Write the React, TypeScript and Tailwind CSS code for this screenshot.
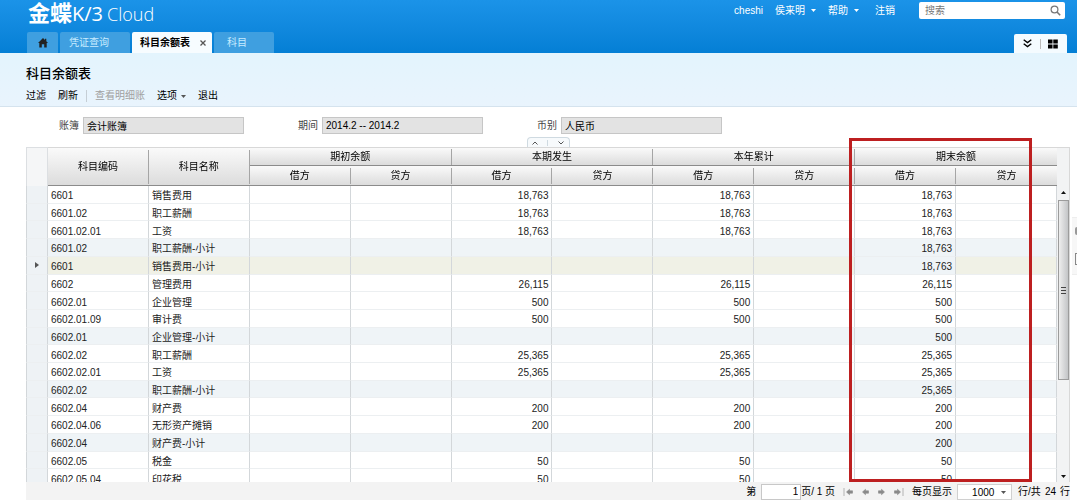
import { useState } from "react";

type Row = {
  code: string;
  name: string;
  amount: string;
  kind?: "subtotal" | "current";
};

const rows: Row[] = [
  { code: "6601", name: "销售费用", amount: "18,763" },
  { code: "6601.02", name: "职工薪酬", amount: "18,763" },
  { code: "6601.02.01", name: "工资", amount: "18,763" },
  { code: "6601.02", name: "职工薪酬-小计", amount: "18,763", kind: "subtotal" },
  { code: "6601", name: "销售费用-小计", amount: "18,763", kind: "current" },
  { code: "6602", name: "管理费用", amount: "26,115" },
  { code: "6602.01", name: "企业管理", amount: "500" },
  { code: "6602.01.09", name: "审计费", amount: "500" },
  { code: "6602.01", name: "企业管理-小计", amount: "500", kind: "subtotal" },
  { code: "6602.02", name: "职工薪酬", amount: "25,365" },
  { code: "6602.02.01", name: "工资", amount: "25,365" },
  { code: "6602.02", name: "职工薪酬-小计", amount: "25,365", kind: "subtotal" },
  { code: "6602.04", name: "财产费", amount: "200" },
  { code: "6602.04.06", name: "无形资产摊销", amount: "200" },
  { code: "6602.04", name: "财产费-小计", amount: "200", kind: "subtotal" },
  { code: "6602.05", name: "税金", amount: "50" },
  { code: "6602.05.04", name: "印花税", amount: "50" },
];

const groups = ["期初余额", "本期发生", "本年累计", "期末余额"];

function Caret({ className }: { className: string }) {
  return (
    <svg className={className} width="5" height="3" viewBox="0 0 5 3" aria-hidden="true">
      <path d="M0 0h5L2.5 3z" fill="currentColor" />
    </svg>
  );
}

function TopBar() {
  return (
    <header className="flex h-[53px] shrink-0 flex-col justify-between bg-linear-to-b from-[#1b93e8] to-[#047fd5] text-white">
      <div className="flex items-start justify-between pr-3 pl-7">
        <h1 className="flex items-baseline leading-[26px]">
          <span className="text-[22px] font-bold">金蝶</span>
          <span className="font-['Open_Sans'] text-xl font-medium">K/3</span>
          <span className="ml-1 font-['Open_Sans'] text-lg font-light">Cloud</span>
        </h1>
        <div className="flex items-center pt-0.5">
          <nav className="flex items-center">
            <span>cheshi</span>
            <button className="ml-3 flex items-center">
              侯来明
              <Caret className="ml-1.5" />
            </button>
            <button className="ml-3 flex items-center">
              帮助
              <Caret className="ml-1.5" />
            </button>
            <a href="#logout" className="ml-4">
              注销
            </a>
          </nav>
          <div className="ml-6 flex h-[17px] w-[146px] items-center rounded-xs bg-white pr-1 pl-1.5">
            <input
              aria-label="搜索"
              placeholder="搜索"
              className="min-w-0 flex-1 text-[#333] outline-none placeholder:text-[#777]"
            />
            <svg width="11" height="11" viewBox="0 0 11 11" fill="none" stroke="#777" aria-hidden="true">
              <circle cx="4.5" cy="4.5" r="3.4" strokeWidth="1.2" />
              <path d="M7 7l3.2 3.2" strokeWidth="1.6" />
            </svg>
          </div>
        </div>
      </div>

      <div className="flex h-[21px] justify-between pr-[10px] pl-[27px]">
        <div className="flex gap-0.5">
          <button aria-label="首页" className="flex w-[31px] items-center justify-center rounded-t-xs bg-[#3f9fe0]">
            <svg width="10" height="10" viewBox="0 0 10 10" aria-hidden="true">
              <path d="M5 0L0 5h1.3v4.5h2.5V6.3h2.4v3.2h2.5V5H10L8.3 3.3V.8H7v1.2z" fill="#222" />
            </svg>
          </button>
          <button className="w-[70px] rounded-t-xs bg-[#3f9fe0] pr-3 text-[#c8ecff]">凭证查询</button>
          <div className="flex w-20 items-center rounded-t-xs bg-[#f7fcff] text-black">
            <button className="pl-2 font-bold">科目余额表</button>
            <button aria-label="关闭" className="ml-2.5">
              <svg width="6" height="6" viewBox="0 0 6 6" stroke="#555" strokeWidth="1.3" aria-hidden="true">
                <path d="M.5.5l5 5M5.5.5l-5 5" />
              </svg>
            </button>
          </div>
          <button className="w-[60px] rounded-t-xs bg-[#3f9fe0] pr-3.5 text-[#c8ecff]">科目</button>
        </div>
        <div className="flex h-[19px] w-[53px] items-center justify-between self-end rounded-t-xs bg-[#f4fbff] px-[9px] text-black">
          <button aria-label="展开">
            <svg width="9" height="9" viewBox="0 0 9 9" fill="none" stroke="currentColor" strokeWidth="1.4" aria-hidden="true">
              <path d="M.7.8l3.8 2.8L8.3.8M.7 4.8l3.8 2.8 3.8-2.8" />
            </svg>
          </button>
          <span className="h-2.5 w-px bg-[#bbb]" />
          <button aria-label="应用">
            <svg width="10" height="10" viewBox="0 0 10 10" fill="currentColor" aria-hidden="true">
              <path d="M0 .5h4.5v4H0zM5.3.5h4.5v4H5.3zM0 5.5h4.5v4H0zM5.3 5.5h4.5v4H5.3z" />
            </svg>
          </button>
        </div>
      </div>
    </header>
  );
}

function Toolbar() {
  return (
    <section className="h-[54px] shrink-0 border-b border-[#d5e3ee] bg-linear-to-b from-[#e3f4fd] to-[#e9f4fd] pl-[26px] text-black">
      <h2 className="pt-[11px] text-[13px] leading-5 font-medium">科目余额表</h2>
      <div className="flex items-center pt-1">
        <button>过滤</button>
        <button className="ml-3">刷新</button>
        <span className="ml-2 h-3 w-px bg-[#c5ced5]" />
        <button disabled className="ml-2 text-[#a0a0a0]">
          查看明细账
        </button>
        <button className="ml-3 flex items-center">
          选项
          <Caret className="ml-1 text-[#555]" />
        </button>
        <button className="ml-3">退出</button>
      </div>
    </section>
  );
}

function Field({ id, label, value }: { id: string; label: string; value: string }) {
  return (
    <div className="flex w-[185px] items-center justify-between">
      <label htmlFor={id} className="text-[#444]">
        {label}
      </label>
      <input
        id={id}
        readOnly
        defaultValue={value}
        className="h-[17px] w-[161px] border border-[#c6c6c6] bg-[#e3e3e3] px-[3px] text-black outline-none"
      />
    </div>
  );
}

const headCell = "border-b border-[#8b8b8b] bg-linear-to-b from-[#fafafa] to-[#dcdcdc] font-normal text-black";

function HeadLabel({ children, line = true }: { children: string; line?: boolean }) {
  return (
    <div className={`flex h-4 items-center justify-center ${line ? "border-r border-[#a5a5a5]" : ""}`}>{children}</div>
  );
}

function BalanceTable() {
  return (
    <table className="h-[340px] w-full table-fixed border-separate border-spacing-0 text-[#222]">
      <colgroup>
        <col className="w-[22px]" />
        <col span={10} />
      </colgroup>
      <thead className="sticky top-0">
        <tr className="h-[19px]">
          <td rowSpan={2} className="border-x border-t border-[#dcdfe2] bg-[#f5f6f7]" />
          {["科目编码", "科目名称"].map((title) => (
            <th key={title} rowSpan={2} className={`${headCell} border-t border-t-[#d8d8d8]`}>
              <div className="flex h-[34px] items-center justify-center border-r border-[#a5a5a5]">{title}</div>
            </th>
          ))}
          {groups.map((group, i) => (
            <th key={group} colSpan={2} className={`${headCell} border-t border-t-[#d8d8d8]`}>
              <HeadLabel line={i < 3}>{group}</HeadLabel>
            </th>
          ))}
        </tr>
        <tr className="h-5">
          {groups.map((group, i) => [
            <th key={`${group}-debit`} className={headCell}>
              <HeadLabel>借方</HeadLabel>
            </th>,
            <th key={`${group}-credit`} className={headCell}>
              <HeadLabel line={i < 3}>贷方</HeadLabel>
            </th>,
          ])}
        </tr>
      </thead>
      <tbody className="leading-[13px] [&_td]:border-r [&_td]:border-b [&_td]:border-r-[#d3d7da] [&_td]:border-b-[#eceff1] [&_td]:p-0">
        {rows.map((row, i) => {
          const moved = row.kind ? "" : row.amount;
          const bg = row.kind === "current" ? "bg-[#f0f1e6]" : row.kind === "subtotal" ? "bg-[#eff4f7]" : "bg-white";
          return (
            <tr key={i} className={`h-[17px] ${bg}`}>
              <td className="border-l border-l-[#d3d7da] bg-[#eef2f5]">
                {row.kind === "current" && (
                  <svg className="mx-auto" width="4" height="6" viewBox="0 0 4 6" aria-hidden="true">
                    <path d="M0 0l4 3-4 3z" fill="#555" />
                  </svg>
                )}
              </td>
              <td>
                <div className="pt-[3px] pl-[3px]">{row.code}</div>
              </td>
              <td>
                <div className="pt-[3px] pl-[3px]">{row.name}</div>
              </td>
              {["", "", moved, "", moved, "", row.amount, ""].map((value, j) => (
                <td key={j} className={j === 6 && row.kind === "current" ? "bg-[#eff4f7]" : ""}>
                  <div className="pt-[3px] pr-[3px] text-right">{value}</div>
                </td>
              ))}
            </tr>
          );
        })}
      </tbody>
    </table>
  );
}

function ScrollRail() {
  return (
    <div className="flex w-[13px] shrink-0 flex-col items-center border-t border-r border-[#d8d8d8] bg-[#f2f3f4] pt-[43px] pb-1" aria-hidden="true">
      <svg width="5" height="3" viewBox="0 0 5 3">
        <path d="M0 3h5L2.5 0z" fill="#111" />
      </svg>
      <div className="mt-1.5 flex h-[180px] w-[11px] shrink-0 items-center justify-center border border-[#9c9c9c] bg-linear-to-r from-[#eeeeee] to-[#c3c5c7]">
        <svg width="5" height="7" viewBox="0 0 5 7" stroke="#444">
          <path d="M0 .5h5M0 3.5h5M0 6.5h5" />
        </svg>
      </div>
      <Caret className="mt-auto text-[#111]" />
    </div>
  );
}

const pagerIcons = [
  { label: "首页", d: "M1 0v8M9.500 2.800H6.500V1.300L3.500 4l3 2.700V5.200h3z" },
  { label: "上一页", d: "M8.500 2.800h-3V1.300L2.500 4l3 2.700V5.200h3z" },
  { label: "下一页", d: "M1.500 2.800h3V1.300L7.500 4l-3 2.700V5.200h-3z" },
  { label: "末页", d: "M9 0v8M.5 2.800h3V1.300L6.500 4l-3 2.700V5.200h-3z" },
];

function Pager() {
  const [page, setPage] = useState("1");
  return (
    <footer className="flex h-[18px] shrink-0 items-center justify-end bg-[#f3f3f3] pt-0.5 text-black">
      <label htmlFor="page">第</label>
      <input
        id="page"
        value={page}
        onChange={(e) => setPage(e.target.value)}
        className="ml-[5px] h-4 w-10 border border-[#c8c8c8] bg-white pr-0.5 text-right outline-none"
      />
      <span className="whitespace-pre">页/ 1 页</span>
      <div className="ml-2 flex gap-[7px]">
        {pagerIcons.map((icon) => (
          <button key={icon.label} aria-label={icon.label}>
            <svg width="10" height="8" viewBox="0 0 10 8" fill="#8a8a8a" stroke="#8a8a8a" strokeWidth="0.6" aria-hidden="true">
              <path d={icon.d} />
            </svg>
          </button>
        ))}
      </div>
      <label htmlFor="page-size" className="ml-2">
        每页显示
      </label>
      <div className="relative ml-[5px]">
        <select
          id="page-size"
          defaultValue="1000"
          className="block h-4 w-[55px] appearance-none border border-[#d0d0d0] bg-white pl-[14px] outline-none"
        >
          <option>500</option>
          <option>1000</option>
        </select>
        <Caret className="pointer-events-none absolute top-[7px] right-1.5 text-[#555]" />
      </div>
      <span className="ml-1.5">行/共</span>
      <span className="mx-1">24</span>
      <span>行</span>
    </footer>
  );
}

export default function App() {
  return (
    <main className="relative flex h-screen flex-col overflow-hidden bg-white font-['Liberation_Sans','Noto_Sans_CJK_SC',sans-serif] text-[10px] leading-4">
      <TopBar />
      <Toolbar />
      <section className="flex shrink-0 gap-[54px] px-[59px] pt-2.5">
        <Field id="book" label="账簿" value="会计账簿" />
        <Field id="period" label="期间" value="2014.2 -- 2014.2" />
        <Field id="currency" label="币别" value="人民币" />
      </section>

      <div className="mt-[3px] mr-[7px] ml-[26px] flex min-h-0 flex-1 flex-col">
        <div className="flex h-[10px] shrink-0 justify-center">
          <div className="flex w-[43px] items-center justify-around rounded-t-sm border border-b-0 border-[#cfdae1] bg-[#f7fafc]">
            <button aria-label="收起">
              <svg width="6" height="4" viewBox="0 0 6 4" fill="none" stroke="#555" aria-hidden="true">
                <path d="M.5 3.500L3 1l2.500 2.500" />
              </svg>
            </button>
            <span className="h-1.5 w-px bg-[#cfdae1]" />
            <button aria-label="展开">
              <svg width="6" height="4" viewBox="0 0 6 4" fill="none" stroke="#555" aria-hidden="true">
                <path d="M.5.5L3 3 5.500.5" />
              </svg>
            </button>
          </div>
        </div>
        <div className="relative flex min-h-0 flex-1">
          <div className="min-w-0 flex-1 overflow-y-auto [scrollbar-width:none]">
            <BalanceTable />
          </div>
          <ScrollRail />
          {/* marks the closing balance columns */}
          <div className="pointer-events-none absolute -top-[9px] right-[38px] bottom-0 w-[183px] border-3 border-[#bd1f20]" />
        </div>
        <Pager />
      </div>

      {/* side dock, mostly off the right edge */}
      <div className="absolute top-[217px] right-0 flex h-[58px] w-[5px] flex-col items-end justify-around border-y border-[#eee] bg-[#f7f7f7]" aria-hidden="true">
        <span className="h-2 w-0.5 rounded-l-sm bg-[#999]" />
        <span className="h-3 w-0.5 border border-r-0 border-[#888]" />
      </div>
    </main>
  );
}
